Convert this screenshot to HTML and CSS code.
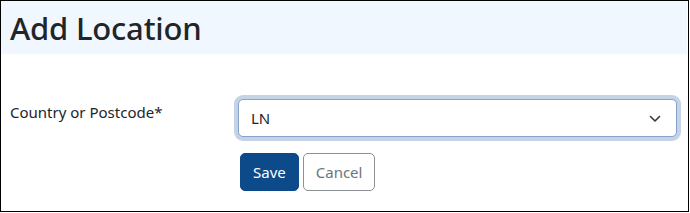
FILE: index.html
```html
<!DOCTYPE html>
<html lang="en">
	<head>
		<title>Add Location</title>
		<meta charset="utf-8">
		<link rel="stylesheet" href="styles.css">
	</head>
	<body>
		<div class="panel">
			<div class="panel-header">
				<h1>Add Location</h1>
			</div>
			<div class="panel-body">
				<div class="form-row">
					<label class="form-label" for="location">Country or Postcode*</label>
					<div class="form-field">
						<div class="select-wrap">
							<select id="location" class="form-select">
								<option>LN</option>
							</select>
							<svg class="chevron" width="12" height="8" viewBox="0 0 12 8"><path d="M1.5 1.5 L6 6 L10.5 1.5" fill="none" stroke="#343a40" stroke-width="1.6" stroke-linecap="round" stroke-linejoin="round"/></svg>
						</div>
						<div class="actions">
							<button class="btn btn-primary">Save</button>
							<button class="btn btn-outline">Cancel</button>
						</div>
					</div>
				</div>
			</div>
		</div>
	</body>
</html>
```

FILE: styles.css
```css
html, body {
	margin: 0;
	padding: 0;
}
body {
	background-color: #ffffff;
	font-family: "Noto Sans", "Open Sans", sans-serif;
	color: #212529;
}
.panel {
	width: 689px;
	height: 212px;
	box-sizing: border-box;
	border: 1px solid #000000;
}
.panel-header {
	background-color: #f0f7fe;
	height: 53px;
	padding: 0 9px;
	margin-right: 1px;
	display: flex;
	align-items: center;
}
.panel-header h1 {
	margin: 0;
	font-size: 31px;
	font-weight: 500;
	letter-spacing: -0.2px;
}
.panel-body {
	padding: 45px 11px 0 9px;
}
.form-row {
	display: flex;
}
.form-label {
	width: 228px;
	font-size: 15px;
	padding-top: 3px;
}
.form-field {
	flex: 1;
	display: flex;
	flex-direction: column;
	gap: 16px;
}
.select-wrap {
	position: relative;
}
.form-select {
	-webkit-appearance: none;
	appearance: none;
	width: 100%;
	height: 38px;
	box-sizing: border-box;
	border: 1px solid #86a2c8;
	border-radius: 5px;
	box-shadow: 0 0 0 4px #c4d3e6;
	background: #ffffff;
	padding: 0 12px;
	font-family: inherit;
	font-size: 15px;
	color: #212529;
	outline: none;
}
.chevron {
	position: absolute;
	right: 16px;
	top: 16px;
	pointer-events: none;
}
.actions {
	display: flex;
	gap: 4px;
	margin-left: 2px;
}
.btn {
	height: 38px;
	box-sizing: border-box;
	border-radius: 5px;
	font-family: inherit;
	font-size: 15px;
	padding: 0 12px;
	cursor: pointer;
}
.btn-primary {
	background-color: #0c4a89;
	border: 1px solid #0c4a89;
	color: #ffffff;
}
.btn-outline {
	background-color: #ffffff;
	border: 1px solid #8c9196;
	color: #6c757d;
}
```
